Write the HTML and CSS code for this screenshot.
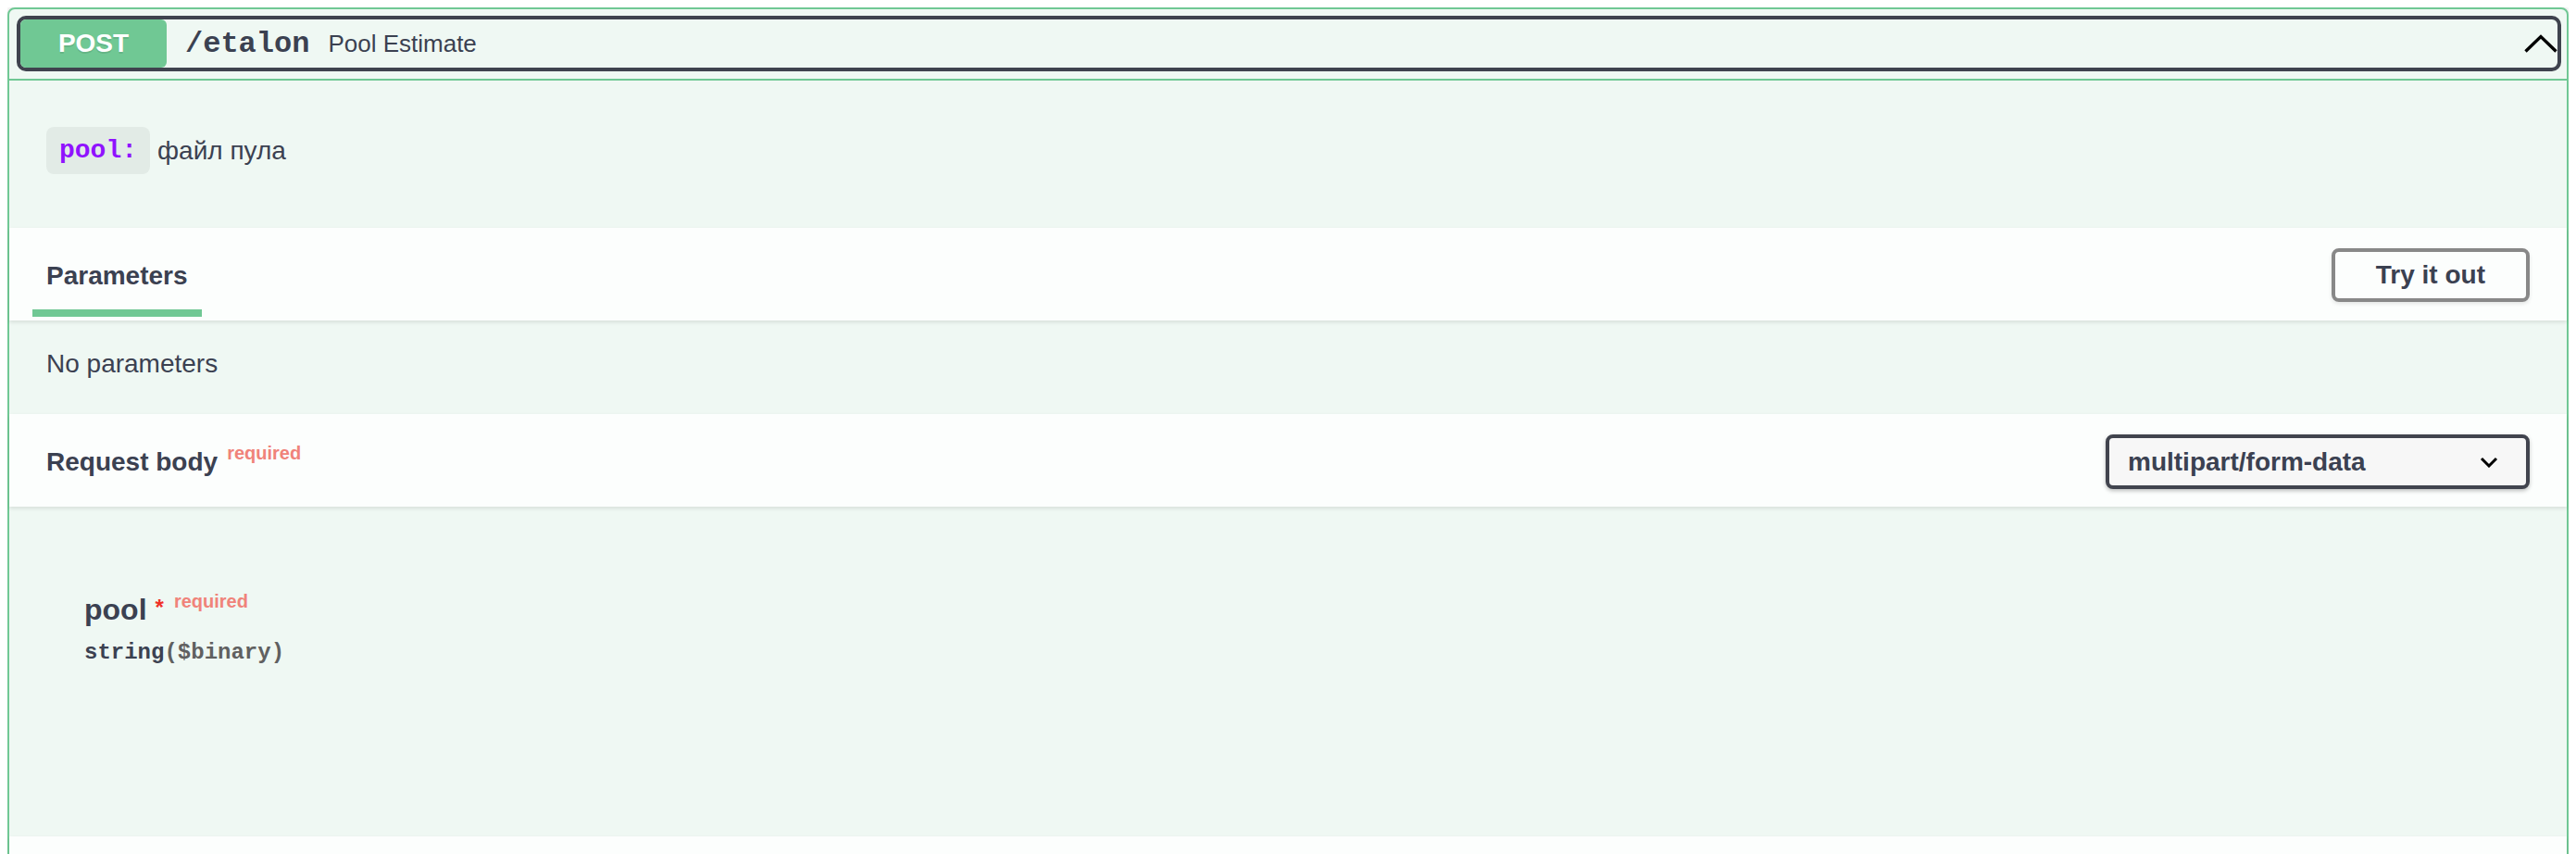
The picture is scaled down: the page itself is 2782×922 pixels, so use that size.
FILE: index.html
```html
<!DOCTYPE html>
<html lang="ru">
<head>
<meta charset="utf-8">
<title>POST /etalon</title>
<link rel="stylesheet" href="styles.css">
</head>
<body>
<div class="opblock">
  <div class="summary">
    <div class="summary-control">
      <span class="method">POST</span>
      <div class="summary-text">
        <span class="path">/etalon</span>
        <span class="summary-desc">Pool Estimate</span>
      </div>
      <svg class="arrow-up" width="36" height="20" viewBox="0 0 36 20"><polyline points="1.5,18.5 18,2.5 34.5,18.5" fill="none" stroke="#000" stroke-width="3.4"/></svg>
    </div>
  </div>

  <div class="op-description">
    <p class="md"><code class="md-code">pool:</code> файл пула</p>
  </div>

  <div class="section-header tab-header">
    <div class="tab-item">
      <h4 class="tab-title">Parameters</h4>
      <div class="tab-bar"></div>
    </div>
    <button class="btn try-out">Try it out</button>
  </div>

  <div class="params-body">
    <p>No parameters</p>
  </div>

  <div class="section-header req-header">
    <h4 class="section-title">Request body<span class="req-label">required</span></h4>
    <div class="select">
      <span>multipart/form-data</span>
      <svg class="select-arrow" width="20" height="12" viewBox="0 0 20 12"><polyline points="2,2 10,10 18,2" fill="none" stroke="#000" stroke-width="3"/></svg>
    </div>
  </div>

  <div class="reqbody">
    <div class="param-name">pool<span class="star">*</span><span class="req-label param-req">required</span></div>
    <div class="param-type">string<span class="fmt">($binary)</span></div>
  </div>

  <div class="section-header responses-header"></div>
</div>
</body>
</html>
```

FILE: styles.css
```css
* {
  box-sizing: border-box;
}

html {
  overflow: hidden;
  background: #ffffff;
}

body {
  margin: 8px;
  font-family: "Liberation Sans", Arial, sans-serif;
  color: #3b4151;
}

.opblock {
  border: 2px solid #70c894;
  border-radius: 8px;
  background: #eff8f3;
  box-shadow: 0 0 6px rgba(0, 0, 0, 0.19);
}

/* summary */
.summary {
  padding: 7px 6px 8px 8px;
  border-bottom: 2px solid #70c894;
}

.summary-control {
  display: flex;
  align-items: center;
  height: 60px;
  border: 4px solid #3f434e;
  border-radius: 10px;
}

.method {
  align-self: stretch;
  flex: none;
  width: 158px;
  display: flex;
  align-items: center;
  justify-content: center;
  background: #70c894;
  color: #ffffff;
  font-size: 28px;
  font-weight: 700;
  border-radius: 6px;
  text-shadow: 0 2px 0 rgba(0, 0, 0, 0.1);
}

.summary-text {
  flex: 1;
  display: flex;
  align-items: baseline;
}

.path {
  padding: 0 20px;
  font-family: "Liberation Mono", "Courier New", monospace;
  font-weight: 700;
  font-size: 32px;
}

.summary-desc {
  font-size: 26px;
}

.arrow-up {
  flex: none;
  display: block;
}

/* description */
.op-description {
  padding: 50px 40px 58px;
}

.md {
  margin: 0;
  display: flex;
  align-items: center;
  gap: 8px;
  font-size: 28px;
}

.md-code {
  display: inline-block;
  padding: 10px 14px;
  line-height: 31px;
  font-family: "Liberation Mono", "Courier New", monospace;
  font-weight: 700;
  font-size: 28px;
  color: #9012fe;
  background: rgba(0, 0, 0, 0.05);
  border-radius: 8px;
}

/* section headers */
.section-header {
  position: relative;
  display: flex;
  align-items: center;
  min-height: 100px;
  padding: 0 40px;
  background: #fcfefd;
  box-shadow: 0 2px 4px rgba(0, 0, 0, 0.1);
}

.tab-header {
  align-items: stretch;
}

.tab-item {
  display: flex;
  flex-direction: column;
  align-items: center;
  padding-top: 36px;
}

.tab-title {
  margin: 0;
  font-size: 28px;
  font-weight: 700;
  line-height: 32px;
}

.tab-bar {
  flex: none;
  width: 120%;
  height: 8px;
  margin-top: 20px;
  background: #70c894;
}

.btn {
  align-self: center;
  margin-left: auto;
  margin-top: 2px;
  padding: 10px 44px;
  font-family: "Liberation Sans", Arial, sans-serif;
  font-size: 28px;
  font-weight: 700;
  line-height: 30px;
  color: #3b4151;
  background: transparent;
  border: 4px solid #888888;
  border-radius: 8px;
  box-shadow: 0 2px 4px rgba(0, 0, 0, 0.1);
}

.req-header {
  padding-top: 3px;
}

.section-title {
  margin: 0;
  padding-top: 3px;
  font-size: 28px;
  font-weight: 700;
  line-height: 32px;
}

.req-label {
  position: relative;
  top: -12px;
  margin-left: 10px;
  font-size: 20px;
  font-weight: 700;
  color: #f0837a;
}

.select {
  margin-left: auto;
  width: 458px;
  height: 59px;
  display: flex;
  align-items: center;
  justify-content: space-between;
  padding: 0 30px 0 20px;
  border: 4px solid #41444e;
  border-radius: 8px;
  background: #f7f7f7;
  box-shadow: 0 2px 4px rgba(0, 0, 0, 0.25);
  font-size: 28px;
  font-weight: 700;
}

.select-arrow {
  display: block;
}

/* bodies */
.params-body {
  padding: 31px 40px 38px;
}

.params-body p {
  margin: 0;
  font-size: 28px;
  line-height: 32px;
}

.reqbody {
  height: 356px;
  padding: 93px 40px 0 81px;
}

.param-name {
  font-size: 32px;
  font-weight: 700;
  line-height: 37px;
}

.star {
  position: relative;
  top: -5px;
  margin-left: 9px;
  font-size: 24px;
  color: #ef3027;
}

.param-req {
  top: -13px;
  margin-left: 11px;
}

.param-type {
  margin-top: 10px;
  font-family: "Liberation Mono", "Courier New", monospace;
  font-size: 24px;
  font-weight: 700;
  line-height: 28px;
}

.fmt {
  color: #606060;
}

.responses-header {
  min-height: 100px;
}
```
